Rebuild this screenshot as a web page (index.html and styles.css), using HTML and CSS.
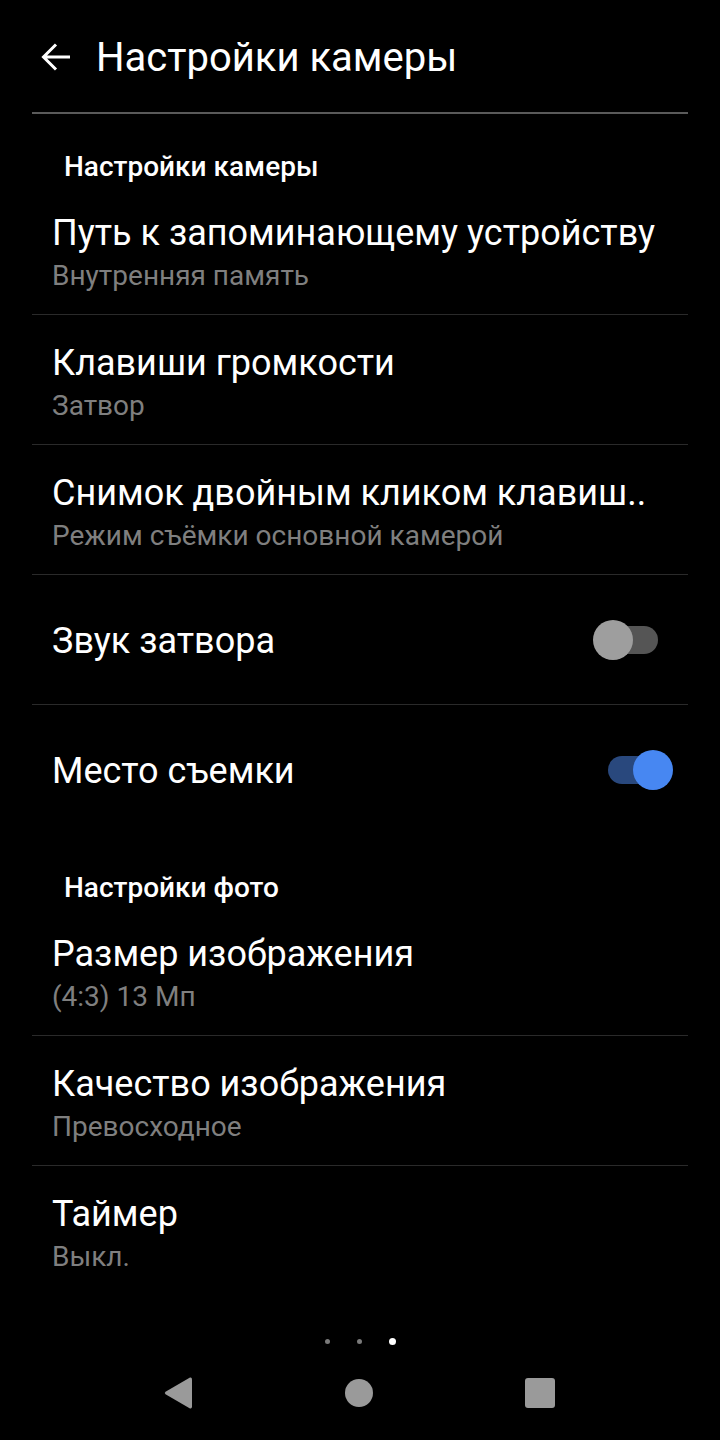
FILE: index.html
```html
<!DOCTYPE html>
<html lang="ru">
<head>
<meta charset="utf-8">
<link rel="stylesheet" href="styles.css">
</head>
<body>
<div class="screen">
  <header class="topbar">
    <svg class="back" width="32" height="32" viewBox="0 0 32 32"><path d="M30 16H4M16 3.5L3.5 16L16 28.5" fill="none" stroke="#fff" stroke-width="3"/></svg>
    <h1 class="title">Настройки камеры</h1>
  </header>
  <div class="divider-top"></div>

  <div class="section-head">Настройки камеры</div>
  <div class="row">
    <div class="row-title">Путь к запоминающему устройству</div>
    <div class="row-sub">Внутренняя память</div>
  </div>
  <div class="row">
    <div class="row-title">Клавиши громкости</div>
    <div class="row-sub">Затвор</div>
  </div>
  <div class="row">
    <div class="row-title">Снимок двойным кликом клавиш..</div>
    <div class="row-sub">Режим съёмки основной камерой</div>
  </div>
  <div class="row row-switch">
    <div class="row-title">Звук затвора</div>
    <div class="switch"><div class="track"></div><div class="thumb"></div></div>
  </div>
  <div class="row row-switch no-line">
    <div class="row-title">Место съемки</div>
    <div class="switch on"><div class="track"></div><div class="thumb"></div></div>
  </div>

  <div class="section-head">Настройки фото</div>
  <div class="row">
    <div class="row-title">Размер изображения</div>
    <div class="row-sub">(4:3) 13 Мп</div>
  </div>
  <div class="row">
    <div class="row-title">Качество изображения</div>
    <div class="row-sub">Превосходное</div>
  </div>
  <div class="row no-line">
    <div class="row-title">Таймер</div>
    <div class="row-sub">Выкл.</div>
  </div>

  <div class="dots"><span class="dot"></span><span class="dot"></span><span class="dot active"></span></div>
  <nav class="navbar">
    <svg width="30" height="34" viewBox="0 0 30 34"><path d="M27 1.5 Q29 1 29 3.5 V30.5 Q29 33 27 32.5 L2.5 18.3 Q1 17 2.5 15.7 Z" fill="#9a9a9a"/></svg>
    <span class="nav-home"></span>
    <span class="nav-recent"></span>
  </nav>
</div>
</body>
</html>
```
FILE: styles.css
```css
* { box-sizing: border-box; }
html, body { margin: 0; padding: 0; background: #000; }
body { font-family: Roboto, "Noto Sans", sans-serif; color: #fff; }
.screen { width: 720px; height: 1440px; background: #000; display: flex; flex-direction: column; }

.topbar { height: 112px; display: flex; align-items: center; padding-left: 40px; }
.back { display: block; margin-top: 1px; }
.title { margin: 4px 0 0 24px; font-size: 40px; font-weight: 400; line-height: 48px; white-space: nowrap; }
.divider-top { height: 2px; background: #5a5a5a; margin: 0 32px; }

.section-head { height: 71px; padding: 39px 0 0 64px; font-size: 28px; font-weight: 500; line-height: 28px; }

.row { height: 130px; margin: 0 32px; padding: 24px 0 0 20px; border-bottom: 1px solid #2a2a2a; display: flex; flex-direction: column; }
.row.no-line { border-bottom-color: transparent; }
.row-title { font-size: 36px; line-height: 48px; white-space: nowrap; }
.row-sub { font-size: 28px; line-height: 38px; color: #7f7f7f; white-space: nowrap; }

.row-switch { flex-direction: row; align-items: center; justify-content: space-between; padding: 2px 0 0 20px; }
.switch { position: relative; width: 80px; height: 40px; margin: -2px 15px 0 0; }
.track { position: absolute; left: 15px; top: 6px; width: 50px; height: 28px; border-radius: 14px; background: #555; }
.thumb { position: absolute; left: 0; top: 0; width: 40px; height: 40px; border-radius: 50%; background: #9e9e9e; }
.switch.on .track { background: #29487d; }
.switch.on .thumb { left: 40px; background: #4787f2; }

.dots { margin-top: 39px; height: 12px; display: flex; justify-content: center; align-items: center; gap: 27px; }
.dot { width: 5px; height: 5px; border-radius: 50%; background: #7a7a7a; }
.dot.active { width: 7px; height: 7px; background: #fff; }

.navbar { height: 92px; display: flex; align-items: center; justify-content: space-between; padding: 0 165px 0 163px; }
.navbar svg { display: block; }
.nav-home { width: 28px; height: 28px; border-radius: 50%; background: #9a9a9a; }
.nav-recent { width: 30px; height: 30px; border-radius: 3px; background: #9a9a9a; }
```
